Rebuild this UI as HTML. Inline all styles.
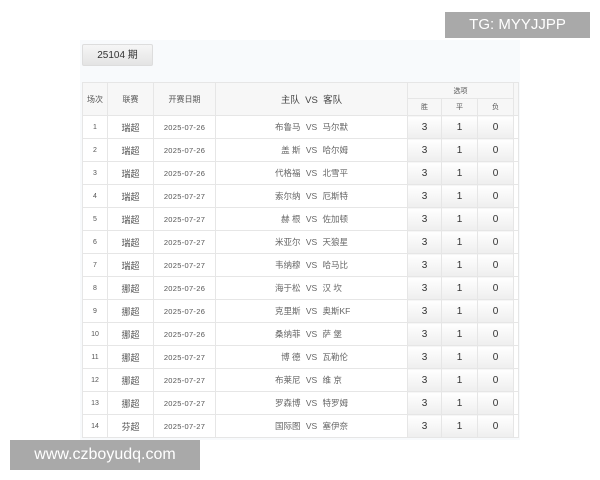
<!DOCTYPE html>
<html><head><meta charset="utf-8"><style>
body{margin:0;width:600px;height:480px;background:#fff;position:relative;overflow:hidden;font-family:"Liberation Sans","Noto Sans CJK SC",sans-serif;}
.panel{position:absolute;left:80px;top:40px;width:440px;height:400px;background:#f8fafc;}
.btn{position:absolute;left:82px;top:44px;width:71px;height:22px;background:linear-gradient(#f6f6f6,#e4e4e4);border:1px solid #ddd;border-radius:2px;box-sizing:border-box;font-size:10px;line-height:21px;text-align:center;color:#333;}
table{position:absolute;left:82px;top:82px;border-collapse:collapse;table-layout:fixed;background:#fff;}
td,th{border:1px solid #e6e6e6;font-size:8px;color:#555;text-align:center;padding:0;font-weight:normal;}
th{background:#f7f7f7;}
tr.r td{height:22px;}
td.n{font-size:7px;}
td.l{font-size:9px;}
td.d{font-size:7.5px;letter-spacing:.3px;}
td.t{font-size:8.5px;color:#666;}
td.t span{display:inline-block;}
td.t .h{width:70px;text-align:right}
td.t .a{width:70px;text-align:left}
td.t .v{width:22px;text-align:center}
td.o{background:linear-gradient(#fff,#eee);font-size:10px;color:#333;}
.tg{position:absolute;left:445px;top:12px;width:145px;height:26px;background:#a9a9a9;color:#fff;font-size:15px;line-height:26px;text-align:center;}
.ww{position:absolute;left:10px;top:440px;width:190px;height:30px;background:#a9a9a9;color:#fff;font-size:16px;line-height:29px;text-align:center;}
</style></head><body>
<div class="panel"></div>
<div class="btn">25104 期</div>
<table>
<colgroup><col style="width:25px"><col style="width:46px"><col style="width:62px"><col style="width:192px"><col style="width:34px"><col style="width:36px"><col style="width:36px"><col style="width:5px"></colgroup>
<tr style="height:16px"><th rowspan="2">场次</th><th rowspan="2">联赛</th><th rowspan="2">开赛日期</th><th rowspan="2" style="font-size:9.5px;color:#444">主队&nbsp; VS &nbsp;客队</th><th colspan="3" style="font-size:7px">选项</th><th rowspan="2"></th></tr>
<tr style="height:17px"><th style="font-size:7px">胜</th><th style="font-size:7px">平</th><th style="font-size:7px">负</th></tr>
<tr class="r"><td class="n">1</td><td class="l">瑞超</td><td class="d">2025-07-26</td><td class="t"><span class="h">布鲁马</span><span class="v">VS</span><span class="a">马尔默</span></td><td class="o">3</td><td class="o">1</td><td class="o">0</td><td></td></tr>
<tr class="r"><td class="n">2</td><td class="l">瑞超</td><td class="d">2025-07-26</td><td class="t"><span class="h">盖 斯</span><span class="v">VS</span><span class="a">哈尔姆</span></td><td class="o">3</td><td class="o">1</td><td class="o">0</td><td></td></tr>
<tr class="r"><td class="n">3</td><td class="l">瑞超</td><td class="d">2025-07-26</td><td class="t"><span class="h">代格福</span><span class="v">VS</span><span class="a">北雪平</span></td><td class="o">3</td><td class="o">1</td><td class="o">0</td><td></td></tr>
<tr class="r"><td class="n">4</td><td class="l">瑞超</td><td class="d">2025-07-27</td><td class="t"><span class="h">索尔纳</span><span class="v">VS</span><span class="a">厄斯特</span></td><td class="o">3</td><td class="o">1</td><td class="o">0</td><td></td></tr>
<tr class="r"><td class="n">5</td><td class="l">瑞超</td><td class="d">2025-07-27</td><td class="t"><span class="h">赫 根</span><span class="v">VS</span><span class="a">佐加顿</span></td><td class="o">3</td><td class="o">1</td><td class="o">0</td><td></td></tr>
<tr class="r"><td class="n">6</td><td class="l">瑞超</td><td class="d">2025-07-27</td><td class="t"><span class="h">米亚尔</span><span class="v">VS</span><span class="a">天狼星</span></td><td class="o">3</td><td class="o">1</td><td class="o">0</td><td></td></tr>
<tr class="r"><td class="n">7</td><td class="l">瑞超</td><td class="d">2025-07-27</td><td class="t"><span class="h">韦纳穆</span><span class="v">VS</span><span class="a">哈马比</span></td><td class="o">3</td><td class="o">1</td><td class="o">0</td><td></td></tr>
<tr class="r"><td class="n">8</td><td class="l">挪超</td><td class="d">2025-07-26</td><td class="t"><span class="h">海于松</span><span class="v">VS</span><span class="a">汉 坎</span></td><td class="o">3</td><td class="o">1</td><td class="o">0</td><td></td></tr>
<tr class="r"><td class="n">9</td><td class="l">挪超</td><td class="d">2025-07-26</td><td class="t"><span class="h">克里斯</span><span class="v">VS</span><span class="a">奥斯KF</span></td><td class="o">3</td><td class="o">1</td><td class="o">0</td><td></td></tr>
<tr class="r"><td class="n">10</td><td class="l">挪超</td><td class="d">2025-07-26</td><td class="t"><span class="h">桑纳菲</span><span class="v">VS</span><span class="a">萨 堡</span></td><td class="o">3</td><td class="o">1</td><td class="o">0</td><td></td></tr>
<tr class="r"><td class="n">11</td><td class="l">挪超</td><td class="d">2025-07-27</td><td class="t"><span class="h">博 德</span><span class="v">VS</span><span class="a">瓦勒伦</span></td><td class="o">3</td><td class="o">1</td><td class="o">0</td><td></td></tr>
<tr class="r"><td class="n">12</td><td class="l">挪超</td><td class="d">2025-07-27</td><td class="t"><span class="h">布莱尼</span><span class="v">VS</span><span class="a">维 京</span></td><td class="o">3</td><td class="o">1</td><td class="o">0</td><td></td></tr>
<tr class="r"><td class="n">13</td><td class="l">挪超</td><td class="d">2025-07-27</td><td class="t"><span class="h">罗森博</span><span class="v">VS</span><span class="a">特罗姆</span></td><td class="o">3</td><td class="o">1</td><td class="o">0</td><td></td></tr>
<tr class="r"><td class="n">14</td><td class="l">芬超</td><td class="d">2025-07-27</td><td class="t"><span class="h">国际图</span><span class="v">VS</span><span class="a">塞伊奈</span></td><td class="o">3</td><td class="o">1</td><td class="o">0</td><td></td></tr>
</table>
<div class="tg">TG: MYYJJPP</div>
<div class="ww">www.czboyudq.com</div>
</body></html>
